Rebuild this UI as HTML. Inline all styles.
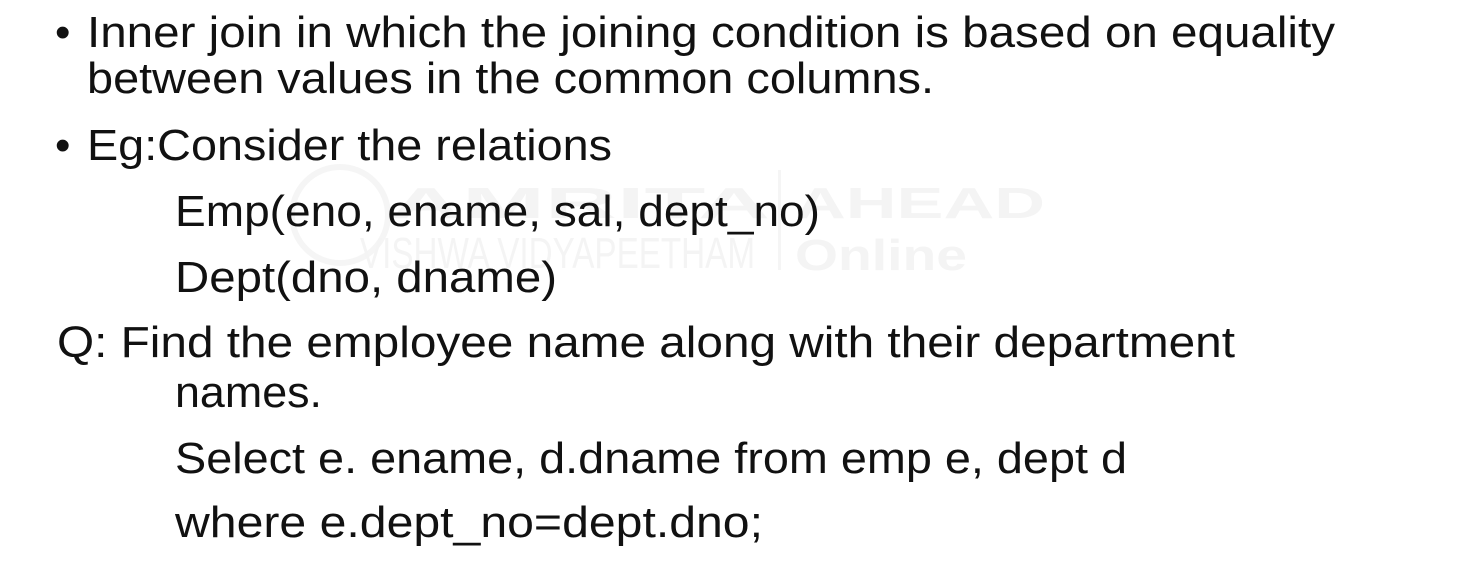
<!DOCTYPE html>
<html><head><meta charset="utf-8"><style>
html,body{margin:0;padding:0;background:#fff;width:1470px;height:567px;overflow:hidden}
svg{display:block}
text{font-family:"Liberation Sans",sans-serif;font-size:44px;fill:#111}
.wm{fill:#f4f4f4;font-weight:bold}
</style></head><body>
<svg width="1470" height="567" viewBox="0 0 1470 567">
<circle cx="340" cy="215" r="48" fill="none" stroke="#f5f5f5" stroke-width="6"/>
<text class="wm" x="390" y="218" font-size="64" textLength="380" lengthAdjust="spacingAndGlyphs">AMRITA</text>
<text class="wm" x="360" y="268" font-size="30" style="font-weight:normal" textLength="395" lengthAdjust="spacingAndGlyphs">VISHWA VIDYAPEETHAM</text>
<rect x="778" y="170" width="3" height="100" fill="#f5f5f5"/>
<text class="wm" x="795" y="218" font-size="64" textLength="250" lengthAdjust="spacingAndGlyphs">AHEAD</text>
<text class="wm" x="795" y="270" font-size="54" textLength="172" lengthAdjust="spacingAndGlyphs">Online</text>

<text x="55" y="47">•</text>
<text x="87" y="47" textLength="1248" lengthAdjust="spacingAndGlyphs">Inner join in which the joining condition is based on equality</text>
<text x="87" y="93" textLength="847" lengthAdjust="spacingAndGlyphs">between values in the common columns.</text>
<text x="55" y="160">•</text>
<text x="87" y="160" textLength="525" lengthAdjust="spacingAndGlyphs">Eg:Consider the relations</text>
<text x="175" y="226" textLength="645" lengthAdjust="spacingAndGlyphs">Emp(eno, ename, sal, dept_no)</text>
<text x="175" y="292" textLength="382" lengthAdjust="spacingAndGlyphs">Dept(dno, dname)</text>
<text x="57" y="357" textLength="1178" lengthAdjust="spacingAndGlyphs">Q: Find the employee name along with their department</text>
<text x="175" y="407" textLength="147" lengthAdjust="spacingAndGlyphs">names.</text>
<text x="175" y="473" textLength="952" lengthAdjust="spacingAndGlyphs">Select e. ename, d.dname from emp e, dept d</text>
<text x="175" y="537" textLength="588" lengthAdjust="spacingAndGlyphs">where e.dept_no=dept.dno;</text>
</svg>
</body></html>
